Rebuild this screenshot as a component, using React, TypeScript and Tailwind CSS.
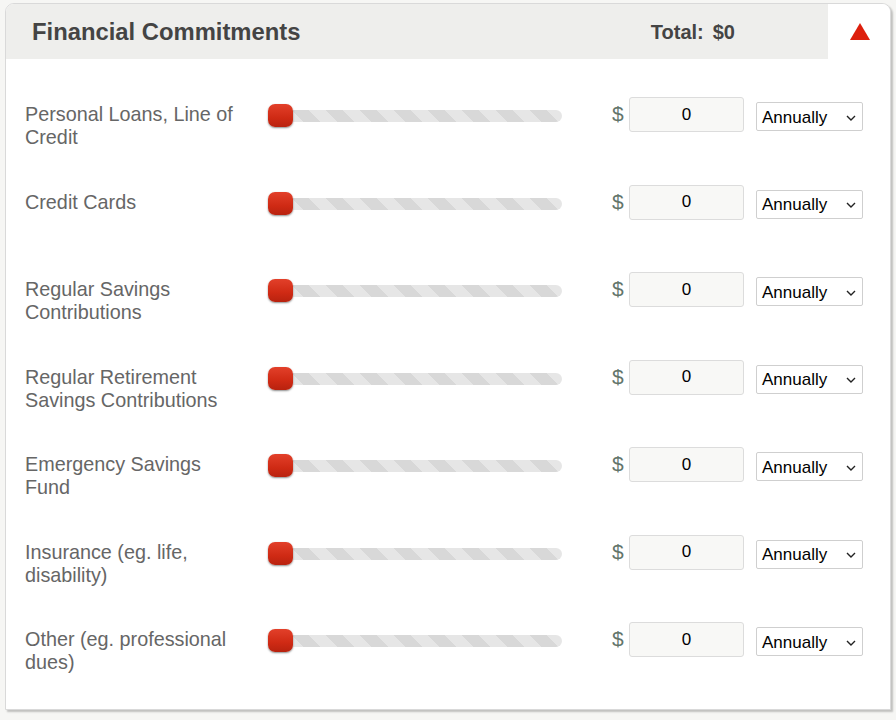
import React from "react";

const rows: string[][] = [
  ["Personal Loans, Line of", "Credit"],
  ["Credit Cards"],
  ["Regular Savings", "Contributions"],
  ["Regular Retirement", "Savings Contributions"],
  ["Emergency Savings", "Fund"],
  ["Insurance (eg. life,", "disability)"],
  ["Other (eg. professional", "dues)"],
];

function Row({ label }: { label: string[] }) {
  return (
    <div className="flex h-[87.5px] items-start">
      <div className="w-[243px] pt-[6px] text-[19.8px] leading-[23px] text-[#666]">
        {label.map((l, i) => (
          <div key={i} className="whitespace-nowrap">{l}</div>
        ))}
      </div>
      <div className="relative mt-[7px] h-[22px] w-[294px]">
        <div className="absolute left-[2px] right-0 top-[6px] h-[12px] rounded-full bg-[repeating-linear-gradient(45deg,#d8d8d8_0px,#d8d8d8_12px,#e6e6e6_12px,#e6e6e6_24px)]" />
        <div className="absolute left-0 top-0 h-[23px] w-[25px] rounded-[7px] bg-[linear-gradient(180deg,#e2402a_0%,#cf2a14_60%,#b8220f_100%)] shadow-[0_1px_2px_rgba(0,0,0,0.45)]" />
      </div>
      <div className="ml-[50px] mt-[5px] w-[17px] text-[21px] leading-[24px] text-[#63756b]">$</div>
      <div className="flex h-[35px] w-[115px] items-center justify-center rounded-[3px] border border-[#dcdcdc] bg-[#f8f8f6] text-[17px] text-black">
        0
      </div>
      <div className="ml-[12px] mt-[5px] flex h-[29px] w-[107px] items-center justify-between rounded-[2px] border border-[#cfcfcf] bg-white pl-[5px] pr-[6px] pt-[2px] text-[17px] text-black">
        <span>Annually</span>
        <svg width="10" height="6" viewBox="0 0 10 6" fill="none">
          <path d="M1 1l4 4 4-4" stroke="#222" strokeWidth="1.4" />
        </svg>
      </div>
    </div>
  );
}

export default function App() {
  return (
    <div className="min-h-[720px] bg-[#f6f6f4] pl-[5px] pr-[5px] pt-[3px] font-['Liberation_Sans',Arial,sans-serif]">
      <div className="h-[707px] w-[886px] overflow-hidden rounded-t-[9px] border border-[#d9d9d9] bg-white shadow-[2px_2px_2px_rgba(0,0,0,0.22)]">
        <div className="flex h-[55px]">
          <div className="flex flex-1 items-center bg-[#eeeeec] pl-[26px]">
            <span className="text-[23.8px] font-bold text-[#444]">Financial Commitments</span>
            <span className="ml-auto mr-[93px] text-[20px] font-bold text-[#444]">
              Total:<span className="ml-[9px]">$0</span>
            </span>
          </div>
          <div className="flex w-[62px] items-center justify-center bg-white pl-[2px]">
            <svg width="20" height="17" viewBox="0 0 20 17">
              <polygon points="10,0 20,17 0,17" fill="#dd1f0c" />
            </svg>
          </div>
        </div>
        <div className="pl-[19px] pt-[38px]">
          {rows.map((r, i) => (
            <Row key={i} label={r} />
          ))}
        </div>
      </div>
    </div>
  );
}
